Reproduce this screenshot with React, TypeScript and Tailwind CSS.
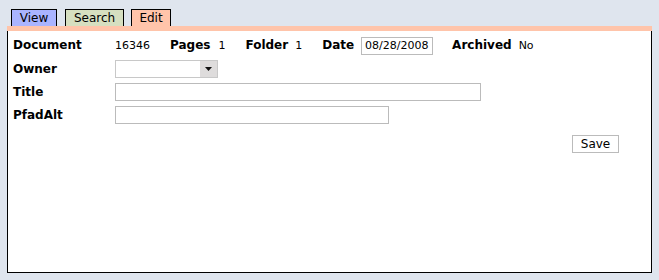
import React from "react";

const tabs = [
  { name: "View", bg: "bg-[#aab4ff]", w: "w-[46px]", ml: "ml-0" },
  { name: "Search", bg: "bg-[#d6dfc0]", w: "w-[59px]", ml: "ml-[8px]" },
  { name: "Edit", bg: "bg-[#ffc4aa]", w: "w-[40px]", ml: "ml-[7px]" },
];

function Label({ children }: { children: React.ReactNode }) {
  return <span className="w-[102px] shrink-0 font-bold">{children}</span>;
}

export default function App() {
  return (
    <div
      className="w-[659px] h-[280px] bg-[#dfe5ee] pt-[9px] px-[7px] pb-[7px] flex flex-col text-[12px] text-black"
      style={{ fontFamily: '"DejaVu Sans", Verdana, sans-serif' }}
    >
      <div className="flex pl-[4px] h-[17px]">
        {tabs.map((t) => (
          <div
            key={t.name}
            className={`${t.bg} ${t.w} ${t.ml} border border-b-0 border-black text-center leading-[16px]`}
          >
            {t.name}
          </div>
        ))}
      </div>
      <div className="h-[5px] bg-[#ffc4aa]" />
      <div className="flex-1 bg-white border-x border-b border-black pl-[5px] pr-[32px] pt-[3px] flex flex-col">
        <div className="flex items-center h-[23px]">
          <div className="flex items-baseline">
            <Label>Document</Label>
            <span className="w-[55px] text-[11px]">16346</span>
            <span className="font-bold mr-[8px]">Pages</span>
            <span className="w-[27px] text-[11px]">1</span>
            <span className="font-bold mr-[7px]">Folder</span>
            <span className="w-[27px] text-[11px]">1</span>
            <span className="font-bold mr-[7px]">Date</span>
            <div className="w-[72px] h-[18px] border border-[#bbbbbb] px-[3px] leading-[16px] text-[11px]">
              08/28/2008
            </div>
            <span className="font-bold ml-[19px] mr-[7px]">Archived</span>
            <span className="text-[11px]">No</span>
          </div>
        </div>
        <div className="flex items-center h-[23px]">
          <Label>Owner</Label>
          <div className="w-[103px] h-[18px] border border-[#c8c8c8] flex">
            <div className="flex-1 bg-white" />
            <div className="w-[17px] bg-[#dedcdc] flex items-center justify-center">
              <svg width="7" height="4" viewBox="0 0 7 4">
                <path d="M0 0h7L3.5 4z" fill="#111" />
              </svg>
            </div>
          </div>
        </div>
        <div className="flex items-center h-[23px]">
          <Label>Title</Label>
          <div className="w-[366px] h-[18px] border border-[#bbbbbb]" />
        </div>
        <div className="flex items-center h-[23px]">
          <Label>PfadAlt</Label>
          <div className="w-[274px] h-[18px] border border-[#bbbbbb]" />
        </div>
        <div className="flex justify-end mt-[9px]">
          <div className="w-[47px] h-[18px] border border-[#bbbbbb] text-center leading-[16px]">
            Save
          </div>
        </div>
      </div>
    </div>
  );
}
